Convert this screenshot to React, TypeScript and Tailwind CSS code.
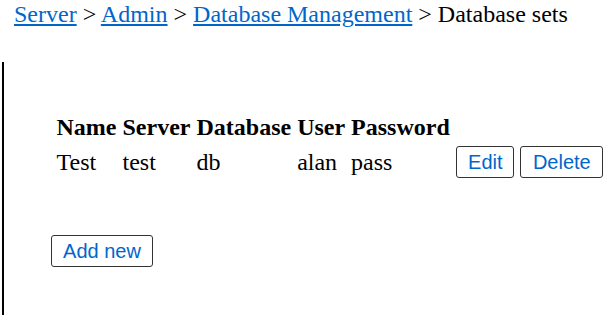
import React from 'react';

interface DbSet {
  name: string;
  server: string;
  database: string;
  user: string;
  password: string;
}

const sets: DbSet[] = [
  { name: 'Test', server: 'test', database: 'db', user: 'alan', password: 'pass' },
];

const crumbs = ['Server', 'Admin', 'Database Management'];

const btn =
  "border border-[#333] rounded-[3px] bg-white px-[8px] h-[32px] text-[20px] leading-none text-[#0066cc] font-['Liberation_Sans',Arial,sans-serif]";

export default function App() {
  return (
    <div className="min-h-[327px] bg-white text-black font-['Liberation_Serif','Times_New_Roman',serif] text-[24px]">
      <div className="pl-[14px] leading-[27px] pt-[1px]">
        {crumbs.map(c => (
          <span key={c}>
            <a href="#" className="text-[#0066cc] underline">{c}</a>
            {' > '}
          </span>
        ))}
        Database sets
      </div>

      <div className="mt-[34px] ml-[2px] h-[253px] border-l-2 border-black pl-[50px] pt-[47px]">
        <table className="border-separate border-spacing-[3px] -ml-[2px]">
          <thead>
            <tr className="text-left font-bold">
              <th className="p-[1.5px] leading-[26.6px]">Name</th>
              <th className="p-[1.5px] leading-[26.6px]">Server</th>
              <th className="p-[1.5px] leading-[26.6px]">Database</th>
              <th className="p-[1.5px] leading-[26.6px]">User</th>
              <th className="p-[1.5px] leading-[26.6px]">Password</th>
              <th className="p-[1.5px]"></th>
            </tr>
          </thead>
          <tbody>
            {sets.map(s => (
              <tr key={s.name}>
                <td className="p-[1.5px] leading-[26.6px]">{s.name}</td>
                <td className="p-[1.5px] leading-[26.6px]">{s.server}</td>
                <td className="p-[1.5px] leading-[26.6px]">{s.database}</td>
                <td className="p-[1.5px] leading-[26.6px]">{s.user}</td>
                <td className="p-[1.5px] leading-[26.6px]">{s.password}</td>
                <td className="p-[1.5px] pl-[2px]">
                  <div className="flex gap-[6px]">
                    <button type="button" className={`${btn} w-[58px]`}>Edit</button>
                    <button type="button" className={`${btn} w-[83px]`}>Delete</button>
                  </div>
                </td>
              </tr>
            ))}
          </tbody>
        </table>

        <button type="button" className={`${btn} w-[102px] h-[32px] mt-[52px] -ml-[3px]`}>Add new</button>
      </div>
    </div>
  );
}
